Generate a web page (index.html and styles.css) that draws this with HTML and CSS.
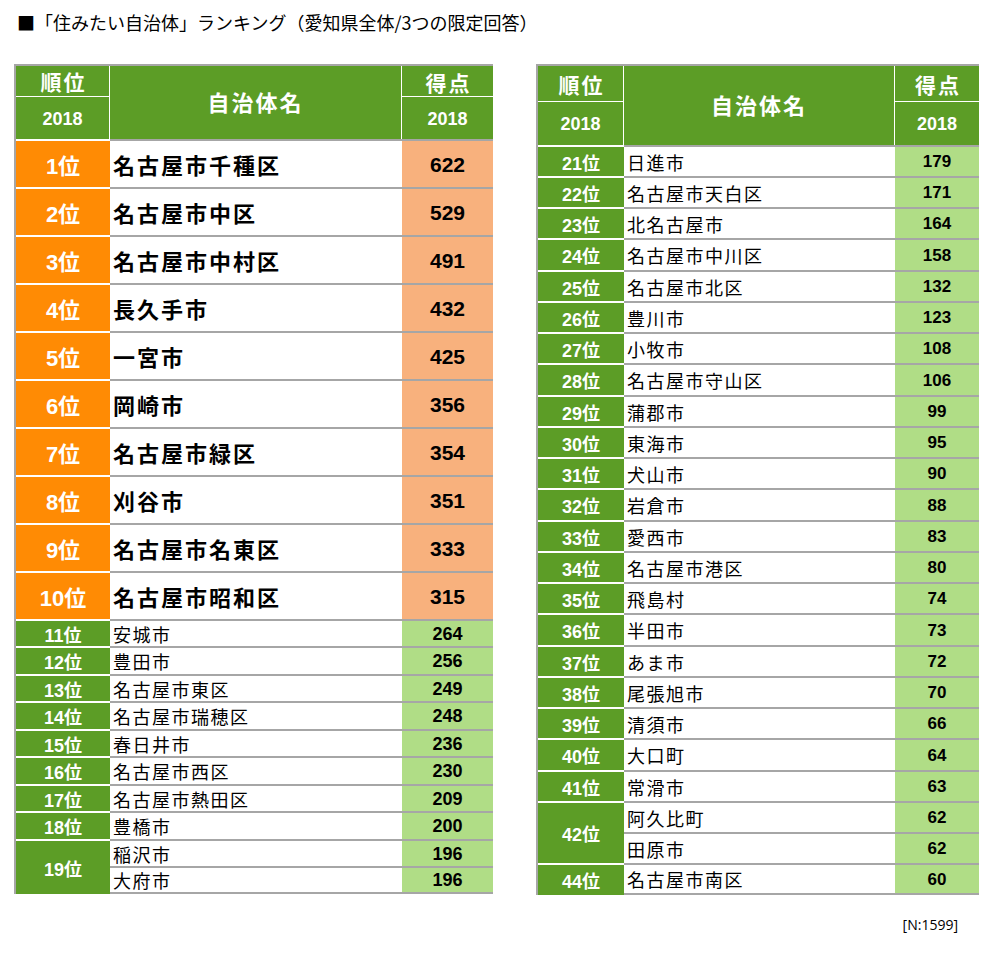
FILE: index.html
```html
<!DOCTYPE html>
<html lang="ja">
<head>
<meta charset="utf-8">
<title>住みたい自治体ランキング</title>
<link rel="stylesheet" href="styles.css">
</head>
<body>
<div class="page">
  <h1 class="title">■「住みたい自治体」ランキング（愛知県全体/3つの限定回答）</h1>
  <div class="tables">
    <div class="rank-table left">
      <div class="h-cell h-rank">順位</div>
      <div class="h-cell h-name">自治体名</div>
      <div class="h-cell h-score">得点</div>
      <div class="h-cell h-year h-rank-year">2018</div>
      <div class="h-cell h-year">2018</div>

      <div class="c-rank top">1位</div><div class="c-name top">名古屋市千種区</div><div class="c-score top">622</div>
      <div class="c-rank top">2位</div><div class="c-name top">名古屋市中区</div><div class="c-score top">529</div>
      <div class="c-rank top">3位</div><div class="c-name top">名古屋市中村区</div><div class="c-score top">491</div>
      <div class="c-rank top">4位</div><div class="c-name top">長久手市</div><div class="c-score top">432</div>
      <div class="c-rank top">5位</div><div class="c-name top">一宮市</div><div class="c-score top">425</div>
      <div class="c-rank top">6位</div><div class="c-name top">岡崎市</div><div class="c-score top">356</div>
      <div class="c-rank top">7位</div><div class="c-name top">名古屋市緑区</div><div class="c-score top">354</div>
      <div class="c-rank top">8位</div><div class="c-name top">刈谷市</div><div class="c-score top">351</div>
      <div class="c-rank top">9位</div><div class="c-name top">名古屋市名東区</div><div class="c-score top">333</div>
      <div class="c-rank top">10位</div><div class="c-name top">名古屋市昭和区</div><div class="c-score top">315</div>

      <div class="c-rank">11位</div><div class="c-name">安城市</div><div class="c-score">264</div>
      <div class="c-rank">12位</div><div class="c-name">豊田市</div><div class="c-score">256</div>
      <div class="c-rank">13位</div><div class="c-name">名古屋市東区</div><div class="c-score">249</div>
      <div class="c-rank">14位</div><div class="c-name">名古屋市瑞穂区</div><div class="c-score">248</div>
      <div class="c-rank">15位</div><div class="c-name">春日井市</div><div class="c-score">236</div>
      <div class="c-rank">16位</div><div class="c-name">名古屋市西区</div><div class="c-score">230</div>
      <div class="c-rank">17位</div><div class="c-name">名古屋市熱田区</div><div class="c-score">209</div>
      <div class="c-rank">18位</div><div class="c-name">豊橋市</div><div class="c-score">200</div>
      <div class="c-rank span2">19位</div><div class="c-name">稲沢市</div><div class="c-score">196</div>
      <div class="c-name last">大府市</div><div class="c-score last">196</div>
    </div>

    <div class="rank-table right">
      <div class="h-cell h-rank">順位</div>
      <div class="h-cell h-name">自治体名</div>
      <div class="h-cell h-score">得点</div>
      <div class="h-cell h-year h-rank-year">2018</div>
      <div class="h-cell h-year">2018</div>

      <div class="c-rank">21位</div><div class="c-name">日進市</div><div class="c-score">179</div>
      <div class="c-rank">22位</div><div class="c-name">名古屋市天白区</div><div class="c-score">171</div>
      <div class="c-rank">23位</div><div class="c-name">北名古屋市</div><div class="c-score">164</div>
      <div class="c-rank">24位</div><div class="c-name">名古屋市中川区</div><div class="c-score">158</div>
      <div class="c-rank">25位</div><div class="c-name">名古屋市北区</div><div class="c-score">132</div>
      <div class="c-rank">26位</div><div class="c-name">豊川市</div><div class="c-score">123</div>
      <div class="c-rank">27位</div><div class="c-name">小牧市</div><div class="c-score">108</div>
      <div class="c-rank">28位</div><div class="c-name">名古屋市守山区</div><div class="c-score">106</div>
      <div class="c-rank">29位</div><div class="c-name">蒲郡市</div><div class="c-score">99</div>
      <div class="c-rank">30位</div><div class="c-name">東海市</div><div class="c-score">95</div>
      <div class="c-rank">31位</div><div class="c-name">犬山市</div><div class="c-score">90</div>
      <div class="c-rank">32位</div><div class="c-name">岩倉市</div><div class="c-score">88</div>
      <div class="c-rank">33位</div><div class="c-name">愛西市</div><div class="c-score">83</div>
      <div class="c-rank">34位</div><div class="c-name">名古屋市港区</div><div class="c-score">80</div>
      <div class="c-rank">35位</div><div class="c-name">飛島村</div><div class="c-score">74</div>
      <div class="c-rank">36位</div><div class="c-name">半田市</div><div class="c-score">73</div>
      <div class="c-rank">37位</div><div class="c-name">あま市</div><div class="c-score">72</div>
      <div class="c-rank">38位</div><div class="c-name">尾張旭市</div><div class="c-score">70</div>
      <div class="c-rank">39位</div><div class="c-name">清須市</div><div class="c-score">66</div>
      <div class="c-rank">40位</div><div class="c-name">大口町</div><div class="c-score">64</div>
      <div class="c-rank">41位</div><div class="c-name">常滑市</div><div class="c-score">63</div>
      <div class="c-rank span2">42位</div><div class="c-name">阿久比町</div><div class="c-score">62</div>
      <div class="c-name">田原市</div><div class="c-score">62</div>
      <div class="c-rank">44位</div><div class="c-name last">名古屋市南区</div><div class="c-score last">60</div>
    </div>
  </div>
  <div class="note">[N:1599]</div>
</div>
</body>
</html>
```

FILE: styles.css
```css
* { box-sizing: border-box; }

html, body {
  margin: 0;
  padding: 0;
  background: #ffffff;
}

body {
  font-family: "Liberation Sans", "Noto Sans CJK JP", sans-serif;
  color: #000000;
  width: 998px;
  height: 960px;
  overflow: hidden;
}

.page {
  padding-top: 9px;
}

.title {
  margin: 0;
  padding-left: 17px;
  font-family: "Noto Sans CJK JP", sans-serif;
  font-weight: 400;
  font-size: 18px;
  line-height: 26px;
  color: #000000;
}

.tables {
  display: flex;
  align-items: flex-start;
  gap: 43px;
  margin-top: 29px;
  padding-left: 14px;
}

.rank-table {
  display: grid;
  border-top: 2px solid #a6a6a6;
  border-left: 2px solid #a6a6a6;
}

.rank-table.left {
  grid-template-columns: 94px 292px 91px;
  grid-template-rows: 31px 42px repeat(10, 48px) repeat(5, 27px 28px);
}

.rank-table.right {
  grid-template-columns: 86px 271px 84px;
  grid-template-rows: 36px 43px repeat(6, 31px 31px 31px 32px);
}

/* header */
.h-cell {
  background: #5c9d26;
  color: #ffffff;
  font-weight: 700;
  display: flex;
  align-items: center;
  justify-content: center;
}

.h-rank {
  font-size: 21px;
  border-right: 1px solid #ffffff;
  border-bottom: 1px solid #ffffff;
  letter-spacing: 2px;
  padding-left: 2px;
}

.h-score {
  font-size: 21px;
  border-bottom: 1px solid #ffffff;
  letter-spacing: 2px;
  padding-left: 2px;
  padding-top: 1px;
}

.h-name {
  grid-row: span 2;
  font-size: 22px;
  border-right: 1px solid #ffffff;
  letter-spacing: 2px;
  padding-bottom: 4px;
}

.h-year {
  font-size: 18px;
  padding-top: 2px;
}

.h-rank-year {
  border-right: 1px solid #ffffff;
}

/* body cells */
.c-rank,
.c-name,
.c-score {
  display: flex;
  align-items: center;
  border-top: 2px solid #a6a6a6;
}

.c-rank {
  justify-content: center;
  background: #5c9d26;
  color: #ffffff;
  font-weight: 700;
  font-size: 18px;
  border-top-color: #ffffff;
}

.c-rank.span2 {
  grid-row: span 2;
}

.c-name {
  background: #ffffff;
  padding-left: 3px;
  font-family: "Noto Sans CJK JP", sans-serif;
  font-size: 18px;
  letter-spacing: 1.5px;
}

.c-score {
  justify-content: center;
  background: #b0dd86;
  font-weight: 700;
  font-size: 18px;
  padding-top: 1px;
}

.c-name.last,
.c-score.last {
  border-bottom: 2px solid #a6a6a6;
}

/* top ten */
.c-rank.top {
  background: #ff8b04;
  font-size: 22px;
}

.c-name.top {
  font-weight: 700;
  font-size: 22px;
  letter-spacing: 2px;
}

.c-score.top {
  background: #f8b17d;
  font-size: 21px;
}

.right .c-score {
  font-size: 17px;
}

.note {
  margin-top: 21px;
  padding-right: 40px;
  text-align: right;
  font-family: "Open Sans", "Liberation Sans", sans-serif;
  font-size: 14px;
  line-height: 18px;
}
```
